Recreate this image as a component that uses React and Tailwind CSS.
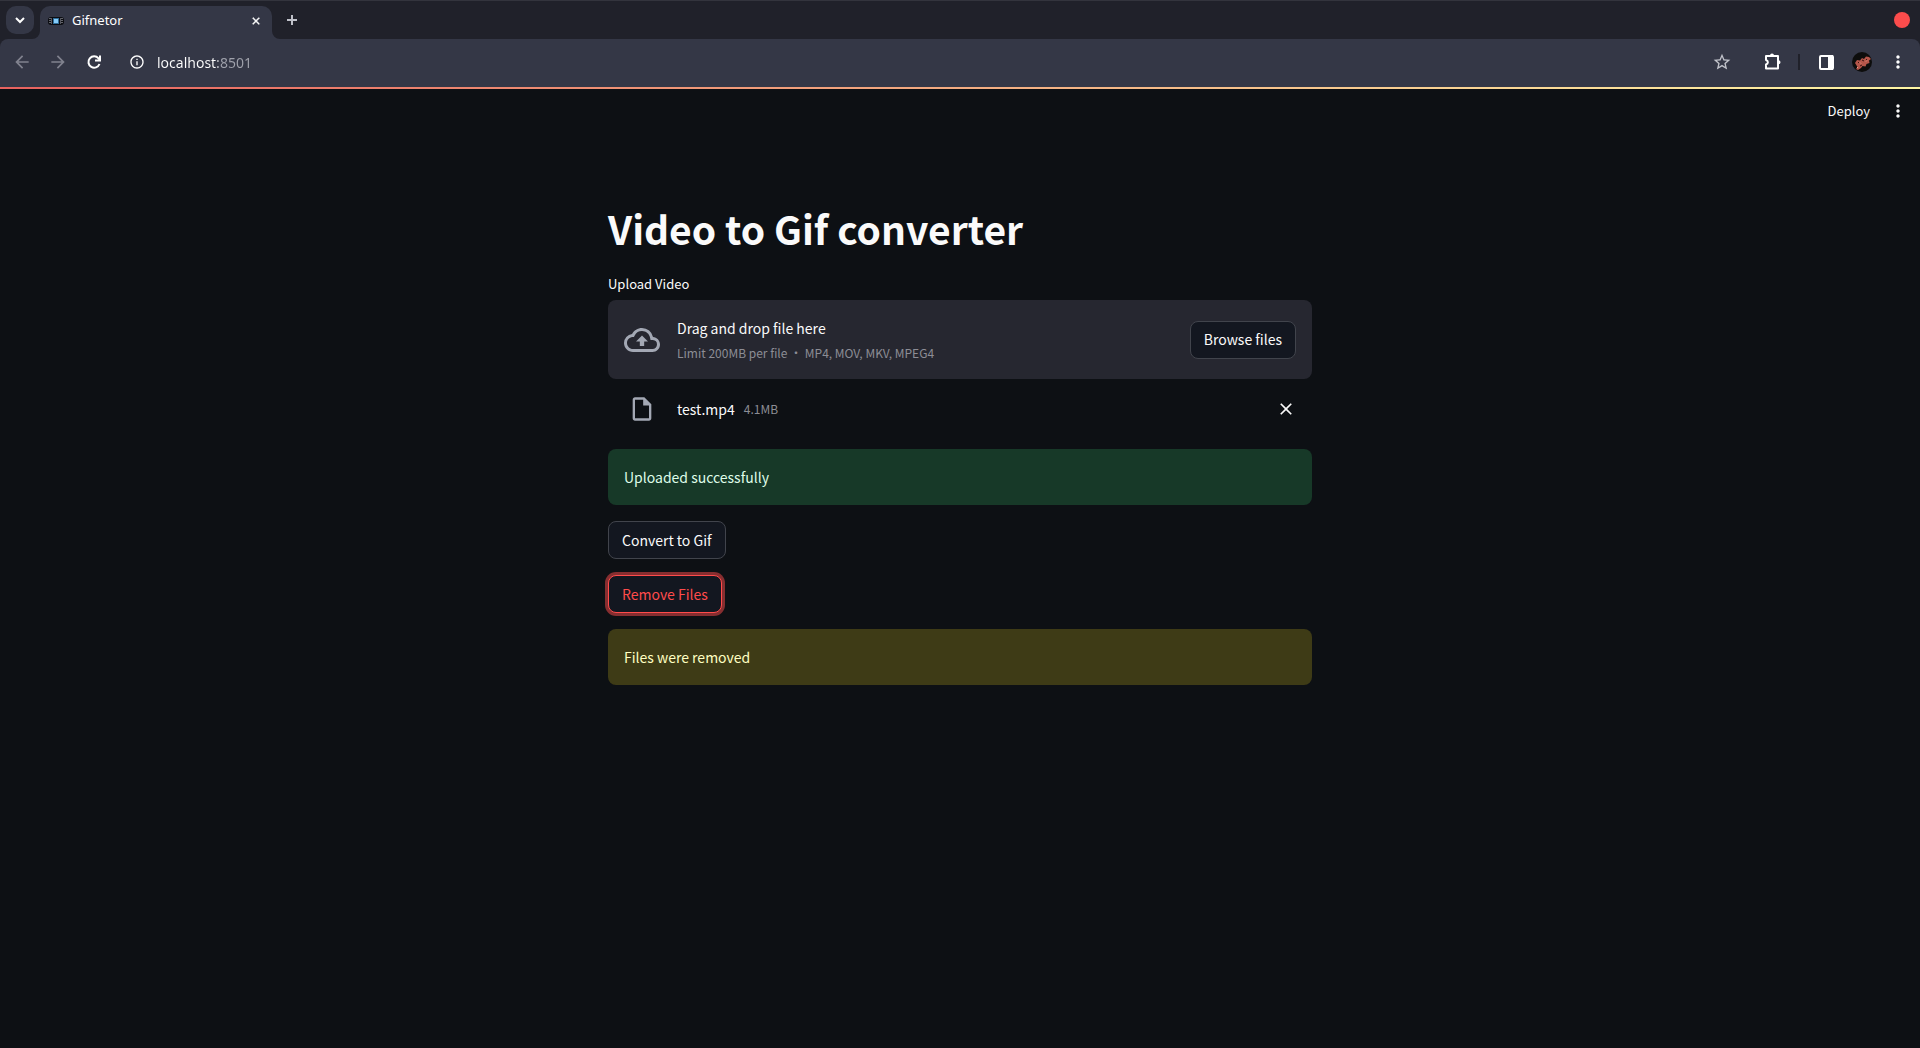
import React from "react";

const Kebab = () => (
  <svg viewBox="0 0 24 24" className="size-5" fill="currentColor" aria-hidden="true">
    <path d="M12 8c1.1 0 2-.9 2-2s-.9-2-2-2-2 .9-2 2 .9 2 2 2zm0 2c-1.1 0-2 .9-2 2s.9 2 2 2 2-.9 2-2-.9-2-2-2zm0 6c-1.1 0-2 .9-2 2s.9 2 2 2 2-.9 2-2-.9-2-2-2z" />
  </svg>
);

const Icon = ({ d, className = "size-5" }) => (
  <svg viewBox="0 0 24 24" className={className} fill="currentColor" aria-hidden="true">
    <path d={d} />
  </svg>
);

const CLOSE = "M19 6.41 17.59 5 12 10.59 6.41 5 5 6.41 10.59 12 5 17.59 6.41 19 12 13.41 17.59 19 19 17.59 13.41 12z";
const BACK = "M20 11H7.83l5.59-5.59L12 4l-8 8 8 8 1.41-1.41L7.83 13H20v-2z";
const FORWARD = "m12 4-1.41 1.41L16.17 11H4v2h12.17l-5.58 5.59L12 20l8-8z";
const INFO = "M11 7h2v2h-2zm0 4h2v6h-2zm1-9C6.48 2 2 6.48 2 12s4.48 10 10 10 10-4.48 10-10S17.52 2 12 2zm0 18c-4.41 0-8-3.59-8-8s3.59-8 8-8 8 3.59 8 8-3.59 8-8 8z";
const STAR = "m22 9.24-7.19-.62L12 2 9.19 8.63 2 9.24l5.46 4.73L5.82 21 12 17.27 18.18 21l-1.63-7.03L22 9.24zM12 15.4l-3.76 2.27 1-4.28-3.32-2.88 4.38-.38L12 6.1l1.71 4.04 4.38.38-3.32 2.88 1 4.28L12 15.4z";
const CLOUD = "M19.35 10.04A7.49 7.49 0 0 0 12 4C9.11 4 6.6 5.64 5.35 8.04A5.994 5.994 0 0 0 0 14c0 3.31 2.69 6 6 6h13c2.76 0 5-2.24 5-5 0-2.64-2.05-4.78-4.65-4.96zM19 18H6c-2.21 0-4-1.79-4-4 0-2.05 1.53-3.76 3.56-3.97l1.07-.11.5-.95A5.469 5.469 0 0 1 12 6c2.62 0 4.88 1.86 5.39 4.43l.3 1.5 1.53.11A2.98 2.98 0 0 1 22 15c0 1.65-1.35 3-3 3zM8 13h2.55v3h2.9v-3H16l-4-4z";
const FILE = "M14 2H6c-1.1 0-1.99.9-1.99 2L4 20c0 1.1.89 2 1.99 2H18c1.1 0 2-.9 2-2V8l-6-6zM6 20V4h7v5h5v11H6z";

function TabStrip() {
  return (
    <div className="flex h-[39px] items-center border-t border-[#33343d] bg-[#20212a] px-[6px]">
      <button aria-label="Search tabs" className="flex size-7 items-center justify-center rounded-[10px] bg-[#343746] text-white">
        <svg viewBox="0 0 12 12" className="size-3" fill="none" stroke="currentColor" strokeWidth="2" aria-hidden="true">
          <path d="M2 4l4 4 4-4" />
        </svg>
      </button>
      <div className="relative ml-[6px] flex h-[33px] w-[232px] items-center self-end rounded-t-[10px] bg-[#343746] pr-[10px] pb-1 pl-2 text-[13px] text-white">
        <svg viewBox="0 0 8 8" className="absolute bottom-0 -left-2 size-2" fill="#343746" aria-hidden="true"><path d="M8 0v8H0a8 8 0 0 0 8-8z" /></svg>
        <svg viewBox="0 0 8 8" className="absolute -right-2 bottom-0 size-2" fill="#343746" aria-hidden="true"><path d="M0 0v8h8a8 8 0 0 1-8-8z" /></svg>
        <svg viewBox="0 0 16 16" className="size-4" aria-hidden="true">
          <rect x="0" y="4" width="16" height="8" rx="3" fill="#0c0d12" />
          <path d="M2 5v6M14 5v6" stroke="#b9bcc4" strokeDasharray="1 1" />
          <path d="M3.500 5v6M12.500 5v6" stroke="#55575f" />
          <rect x="5" y="5" width="6" height="6" fill="#2f6c98" />
          <rect x="6" y="6" width="4" height="4" fill="#86cdfa" />
        </svg>
        <span className="ml-2 grow">Gifnetor</span>
        <button aria-label="Close tab" className="flex items-center"><Icon d={CLOSE} className="size-3 stroke-current stroke-1" /></button>
      </div>
      <button aria-label="New tab" className="ml-3 text-[#c0c2ca]">
        <svg viewBox="0 0 16 16" className="size-4" fill="none" stroke="currentColor" strokeWidth="2" aria-hidden="true"><path d="M8 3v10M3 8h10" /></svg>
      </button>
      <button aria-label="Close window" className="mr-1 ml-auto size-4 rounded-full bg-[#fb4c4c]" />
    </div>
  );
}

function Toolbar() {
  return (
    <div className="bg-[#20212a]">
      <div className="flex h-12 items-center rounded-t-lg bg-[#343746] px-3 pb-[2px] text-white">
        <button aria-label="Back" className="text-[#80828e]"><Icon d={BACK} className="size-5" /></button>
        <button aria-label="Forward" className="ml-4 text-[#80828e]"><Icon d={FORWARD} className="size-5" /></button>
        <button aria-label="Reload" className="ml-4">
          <svg viewBox="0 0 20 20" className="size-5" fill="none" stroke="currentColor" strokeWidth="2" aria-hidden="true">
            <path d="M15.500 12A5.700 5.700 0 1 1 14.500 6.300L16 8" />
            <path d="M16 3.500V8.500H11" />
          </svg>
        </button>
        <button aria-label="Site information" className="ml-[25px]"><Icon d={INFO} className="size-4" /></button>
        <input
          aria-label="Address"
          defaultValue="localhost:8501"
          className="ml-3 h-7 grow bg-[linear-gradient(90deg,#ffffff_61px,#a0a2ac_61px)] bg-clip-text text-[14px] text-transparent caret-white outline-none"
        />
        <button aria-label="Bookmark" className="text-[#c0c2ca]"><Icon d={STAR} className="size-5" /></button>
        <button aria-label="Extensions" className="ml-[31px]">
          <svg viewBox="0 0 20 20" className="size-5" fill="none" stroke="currentColor" strokeWidth="2" strokeLinejoin="round" aria-hidden="true">
            <path d="M3 4h12v12.500H3v-4c2.500-.8 2.500-3.700 0-4.500z" />
            <path d="M7 3.500a2 2 0 0 1 4 0zM15.500 8.300a2 2 0 0 1 0 4z" fill="currentColor" stroke="none" />
          </svg>
        </button>
        <span className="ml-[15px] h-4 w-[2px] bg-[#20212a]" />
        <button aria-label="Side panel" className="ml-[17px]">
          <svg viewBox="0 0 20 20" className="size-5" fill="none" stroke="currentColor" strokeWidth="2" aria-hidden="true">
            <rect x="3" y="4" width="13" height="13" rx="1" /><path d="M11 3h5v15h-5z" fill="currentColor" stroke="none" />
          </svg>
        </button>
        <button aria-label="Profile" className="ml-[15px]">
          <svg viewBox="0 0 20 20" className="size-5" aria-hidden="true">
            <circle cx="10" cy="10" r="10" fill="#0d0d0c" />
            <path d="M3 11l2-3 3 .5L10 6l2 1 2-2.500 3 .5 2 2-2 1.500.5 2.500-3 1-1 2.500-3-.5L9 16l-3 2-2-1 1.500-2z" fill="#b5564a" />
            <path d="M6 10l1 1M10 8l2 1M8 14l2-1M14 7l1 1" stroke="#3a1310" />
            <path d="M8 10.500l1 1M14 9.500l1-1M5 16l1-1" stroke="#eba08f" />
          </svg>
        </button>
        <button aria-label="Browser menu" className="ml-4"><Kebab /></button>
      </div>
    </div>
  );
}

const buttonClass = "h-[38px] rounded-lg border bg-[#131720] px-[13px] text-[14px]";

export default function App() {
  return (
    <div className="flex min-h-screen flex-col bg-[#0d1014] font-['Noto_Sans',sans-serif]">
      <TabStrip />
      <Toolbar />
      <div className="grow font-['Noto_Sans_CJK_SC',sans-serif] text-[#fafafa]">
        <div className="h-[2px] bg-linear-to-r/srgb from-[#e8625f] to-[#fff6a4]" />
        <header className="flex h-[45px] items-center justify-end gap-[18px] pr-3 pb-[2px] text-[13px]">
          <button>Deploy</button>
          <button aria-label="Main menu"><Kebab /></button>
        </header>
        <main className="mx-auto w-full max-w-[704px] pt-[68px]">
          <h1 className="text-[39px] leading-[52px] font-bold">Video to Gif converter</h1>
          <label htmlFor="browse" className="mt-[19px] block text-[13px] leading-[22px]">Upload Video</label>
          <section className="mt-[5px] flex h-[79px] items-center rounded-lg bg-[#262730] px-4">
            <Icon d={CLOUD} className="size-9 text-[#a3a8b4]" />
            <div className="ml-[17px] grow">
              <p className="text-[14px] leading-[26px]">Drag and drop file here</p>
              <p className="text-[12px] leading-[24px] text-[#8c8d95]">Limit 200MB per file • MP4, MOV, MKV, MPEG4</p>
            </div>
            <button id="browse" className={`${buttonClass} border-[#41444c]`}>Browse files</button>
          </section>
          <div className="flex h-[60px] items-center pr-4 pl-5">
            <Icon d={FILE} className="size-7 text-[#a3a8b4]" />
            <p className="ml-[21px] text-[14px]">test.mp4</p>
            <p className="ml-[9px] grow text-[12px] text-[#8c8d95]">4.1MB</p>
            <button aria-label="Remove test.mp4"><Icon d={CLOSE} className="size-5" /></button>
          </div>
          <div className="mt-[10px] flex flex-col items-start gap-4 text-[14px]">
            <div role="alert" className="flex h-14 w-full items-center rounded-lg bg-[#173928] px-4 text-[#dffde9]">Uploaded successfully</div>
            <button className={`${buttonClass} border-[#41444c]`}>Convert to Gif</button>
            <button className={`${buttonClass} border-[#ff4b4b] text-[#ff4b4b] ring-3 ring-[#ff4b4b]/50`}>Remove Files</button>
            <div role="alert" className="flex h-14 w-full items-center rounded-lg bg-[#3e3b16] px-4 text-[#ffffc2]">Files were removed</div>
          </div>
        </main>
      </div>
    </div>
  );
}
